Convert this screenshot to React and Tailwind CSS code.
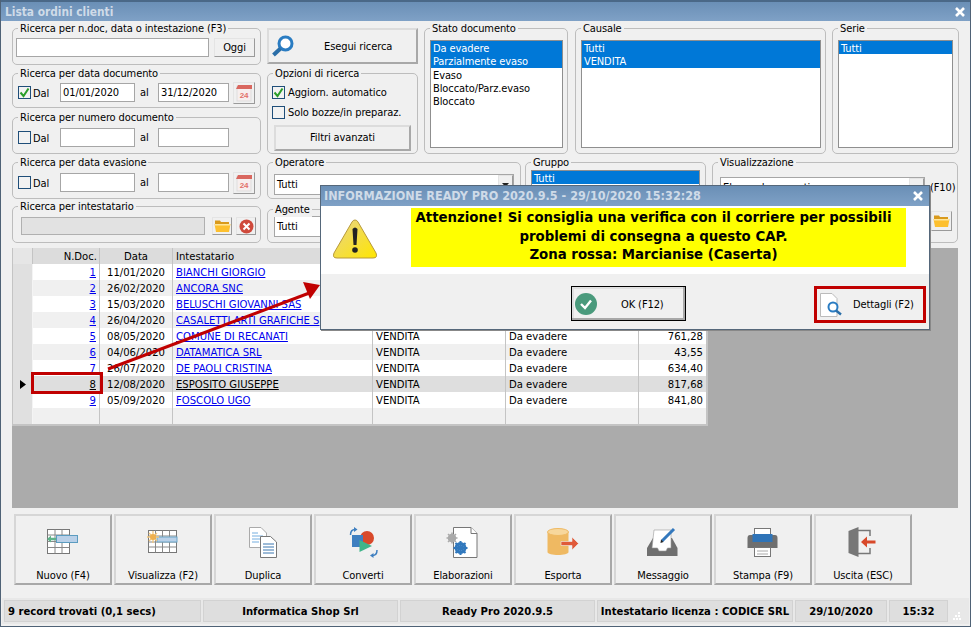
import React from "react";

const ROWS = [
  { n: 1, date: "11/01/2020", name: "BIANCHI GIORGIO" },
  { n: 2, date: "26/02/2020", name: "ANCORA SNC" },
  { n: 3, date: "15/03/2020", name: "BELUSCHI GIOVANNI SAS" },
  { n: 4, date: "26/04/2020", name: "CASALETTI ARTI GRAFICHE S" },
  { n: 5, date: "08/05/2020", name: "COMUNE DI RECANATI", total: "761,28" },
  { n: 6, date: "04/06/2020", name: "DATAMATICA SRL", total: "43,55" },
  { n: 7, date: "26/07/2020", name: "DE PAOLI CRISTINA", total: "634,40" },
  { n: 8, date: "12/08/2020", name: "ESPOSITO GIUSEPPE", total: "817,68" },
  { n: 9, date: "05/09/2020", name: "FOSCOLO UGO", total: "841,80" },
];

const COLS = "grid grid-cols-[20px_67px_73px_200px_133px_133px_67px]";
const RAISED = "border border-t-[#e4e4e4] border-l-[#e4e4e4] border-b-[#9a9a9a] border-r-[#9a9a9a] bg-[#f0f0f0]";
const RAISED2 = "border-2 border-t-[#dcdcdc] border-l-[#dcdcdc] border-b-[#a8a8a8] border-r-[#a8a8a8]";
const FIELD = "border border-[#a6a6a6] bg-white";

const Box = ({ label, className = "", children }) => (
  <div className={`relative rounded-[5px] border border-[#bdbdbd] ${className}`}>
    <span className="absolute -top-[7px] left-[5px] whitespace-nowrap bg-[#f0f0f0] px-[2px]">{label}</span>
    {children}
  </div>
);

const Check = ({ checked }) => (
  <span className="flex h-[13px] w-[13px] shrink-0 items-center justify-center border border-[#1f4e79] bg-[#f2f2f2]">
    {checked && (
      <svg width="11" height="11" viewBox="0 0 11 11">
        <path d="M1.5 5.5 L4.5 9 L9.5 1.5" fill="none" stroke="#2a9d2a" strokeWidth="2" />
      </svg>
    )}
  </span>
);

const Calendar = () => (
  <svg width="18" height="18" viewBox="0 0 18 18">
    <rect x="2" y="2" width="14" height="15" fill="#f7eeee" stroke="#ddd" />
    <path d="M1 5 L3 1 L17 1 L17 5 Z" fill="#d9675f" />
    <text x="9" y="14" textAnchor="middle" fontSize="8" fontWeight="700" fill="#e2706a" fontFamily="Liberation Sans, sans-serif">24</text>
  </svg>
);

const Folder = () => (
  <svg width="17" height="14" viewBox="0 0 17 14">
    <path d="M1 3 L1 1.5 L6 1.5 L7 3 L15 3 L15 5 L1 5 Z" fill="#d99a1c" />
    <path d="M0.5 5 L16.5 5 L15 13 L2 13 Z" fill="#fdc02f" />
    <path d="M1 5 L16 5 L16 6.5 L1 6.5 Z" fill="#ffe69a" />
  </svg>
);

const DateRow = ({ checked, first, second, calendar }) => (
  <div className="flex h-full items-center pl-[5px] pt-[4px]">
    <Check checked={checked} />
    <span className="w-[29px] pl-[2px] pt-[2px]">Dal</span>
    <div className={`h-[19px] w-[75px] pl-[2px] leading-[18px] ${FIELD}`}>{first}</div>
    <span className="w-[23px] pl-[5px]">al</span>
    <div className={`h-[19px] w-[71px] pl-[2px] leading-[18px] ${FIELD}`}>{second}</div>
    {calendar && (
      <div className={`ml-[4px] flex h-[22px] w-[22px] items-center justify-center ${RAISED}`}>
        <Calendar />
      </div>
    )}
  </div>
);

const ListBox = ({ items, selected, className = "" }) => (
  <div className={`border border-[#8f8f8f] bg-white leading-[15px] ${className}`}>
    {items.map((item, i) => (
      <div key={item} className={i < selected ? "h-[13.25px] bg-[#0078d7] pl-[2px] text-white" : "h-[13.25px] pl-[2px]"}>
        {item}
      </div>
    ))}
  </div>
);

const Combo = ({ value, className = "" }) => (
  <div className={`flex items-center justify-between pl-[2px] ${FIELD} ${className}`}>
    <span>{value}</span>
    <span className={`flex h-full w-[15px] items-center justify-center ${RAISED}`}>
      <svg width="7" height="4" viewBox="0 0 7 4"><path d="M0 0 H7 L3.5 4 Z" fill="#222" /></svg>
    </span>
  </div>
);

const icons = {
  nuovo: (
    <>
      <rect x="4.5" y="5.5" width="22" height="24" fill="#fff" stroke="#777" />
      <path d="M4.5 11 H26.5 M4.5 17.5 H26.5 M4.5 23.5 H26.5 M12 5.5 V29.5 M19 5.5 V29.5" stroke="#888" />
      <rect x="13.5" y="11.5" width="21" height="7" fill="#b9d0e8" stroke="#5b9cc0" />
      <path d="M4 15 L8 11.5 V13.7 H13 V16.3 H8 V18.5 Z" fill="#5fb38a" />
    </>
  ),
  visualizza: (
    <>
      <rect x="5.5" y="6.5" width="28" height="22" fill="#fff" stroke="#777" />
      <path d="M5.5 12 H33.5 M5.5 18 H33.5 M5.5 23 H33.5 M12.5 6.5 V28.5 M19.5 6.5 V28.5 M26.5 6.5 V28.5" stroke="#888" />
      <rect x="14" y="13" width="20" height="5" fill="#b9d0e8" stroke="#6aa6c8" />
      <path d="M10 7 V19 M4 13 H16 M6 9 L14 17 M14 9 L6 17" stroke="#f2c77e" strokeWidth="1.3" />
      <circle cx="10" cy="13" r="3" fill="#eeb04f" />
    </>
  ),
  duplica: (
    <>
      <path d="M6.5 3.5 H18 L23.5 9 V23.5 H6.5 Z" fill="#fff" stroke="#aaa" />
      <path d="M9 9 H15 M9 12 H20 M9 15 H20 M9 18 H16" stroke="#74aee0" />
      <path d="M17.5 12.5 H27.5 L33.5 18 V33.5 H17.5 Z" fill="#fff" stroke="#777" />
      <path d="M20 20 H31 M20 23 H31 M20 26 H31 M20 29 H31" stroke="#3b76b0" />
    </>
  ),
  converti: (
    <>
      <circle cx="24" cy="14" r="7" fill="#d8492a" />
      <rect x="9" y="11" width="11" height="12" fill="#3e7fc0" />
      <path d="M16.5 16 L29 22 L16.5 28 Z" fill="#3fb58a" />
      <path d="M7.5 11 C7.5 7 9.5 5.5 12 5.5" fill="none" stroke="#3e7fc0" strokeWidth="1.5" />
      <path d="M11 3 L14.5 5.5 L11 8 Z" fill="#3e7fc0" />
      <path d="M34 26 C34 30 32 31.5 29.5 31.5" fill="none" stroke="#3e7fc0" strokeWidth="1.5" />
      <path d="M30.5 29 L27 31.5 L30.5 34 Z" fill="#3e7fc0" />
    </>
  ),
  elaborazioni: (
    <>
      <path d="M10.5 3.5 H28 L34 9.5 V33.5 H10.5 Z" fill="#fff" stroke="#777" />
      <path d="M28 3.5 V9.5 H34" fill="#fff" stroke="#777" />
      <circle cx="9" cy="14" r="3" fill="none" stroke="#aaa" strokeWidth="2.5" />
      <path d="M9 8.5 V19.5 M3.5 14 H14.5 M5 10 L13 18 M13 10 L5 18" stroke="#aaa" strokeWidth="1.5" />
      <circle cx="17.5" cy="24" r="4.5" fill="none" stroke="#3178bd" strokeWidth="3" />
      <path d="M17.5 17 V31 M10.5 24 H24.5 M12.5 19 L22.5 29 M22.5 19 L12.5 29" stroke="#3178bd" strokeWidth="2" />
    </>
  ),
  esporta: (
    <>
      <path d="M4.5 8 V28 C4.5 32 25.5 32 25.5 28 V8 Z" fill="#efb962" />
      <ellipse cx="15" cy="8" rx="10.5" ry="3.5" fill="#f7d79c" stroke="#efb962" />
      <path d="M18 17.5 H29 V13 L35.5 19.5 L29 26 V21.5 H18 Z" fill="#e05a3a" stroke="#f0f0f0" strokeWidth="0.6" />
    </>
  ),
  messaggio: (
    <>
      <path d="M10 14 L4 24 V32 H34.5 V24 L29 14 Z" fill="#6f6f6f" />
      <path d="M11 6 H28 V24 L24.5 24 L23 27 H16 L14.5 24 H9 Z" fill="#fff" stroke="#999" strokeWidth="0.6" />
      <path d="M19 17 L31 5" stroke="#3378bd" strokeWidth="3" />
      <path d="M17.5 19 L18 15.5 L20.5 18 Z" fill="#222" />
    </>
  ),
  stampa: (
    <>
      <rect x="11.5" y="4.5" width="16" height="8" fill="#fff" stroke="#777" />
      <path d="M7 11 H32 Q34.5 11 34.5 14 V24 H4.5 V14 Q4.5 11 7 11 Z" fill="#6f6f6f" />
      <rect x="9.5" y="10" width="20" height="8" fill="#2f74b8" />
      <rect x="11.5" y="23.5" width="16" height="9" fill="#fff" stroke="#777" />
      <path d="M14 27 H25 M14 30 H25" stroke="#aaa" />
    </>
  ),
  uscita: (
    <>
      <path d="M15 6.5 H27 V12 M27 24 V29.5 H15" fill="none" stroke="#777" strokeWidth="1.5" />
      <path d="M5.5 7 L15.5 3 V33 L5.5 29 Z" fill="#777" />
      <path d="M18 18 L24 12.5 V16.5 H32.5 V19.5 H24 V23.5 Z" fill="#d8492a" />
    </>
  ),
};

const TOOLBAR = [
  ["nuovo", "Nuovo (F4)"],
  ["visualizza", "Visualizza (F2)"],
  ["duplica", "Duplica"],
  ["converti", "Converti"],
  ["elaborazioni", "Elaborazioni"],
  ["esporta", "Esporta"],
  ["messaggio", "Messaggio"],
  ["stampa", "Stampa (F9)"],
  ["uscita", "Uscita (ESC)"],
];

const ToolButton = ({ icon, label }) => (
  <div className="flex h-[71px] w-[98px] flex-col items-center border-2 border-t-[#d6d6d6] border-l-[#d6d6d6] border-b-[#a8a8a8] border-r-[#a8a8a8] pt-[8px]">
    <svg width="40" height="36" viewBox="0 0 40 36">{icons[icon]}</svg>
    <span className="mt-[9px]">{label}</span>
  </div>
);

const StatusCell = ({ className = "", children }) => (
  <div className={`flex h-[22px] items-center justify-center border border-[#d2d2d2] bg-[#dedede] pt-[1px] text-[11.2px] font-bold tracking-normal ${className}`}>
    {children}
  </div>
);

const App = () => (
  <div className="relative flex h-[627px] w-[971px] flex-col overflow-hidden border-x border-b border-[#4f6276] bg-[#f0f0f0] px-[1px] font-['DejaVu_Sans_Condensed','DejaVu_Sans',sans-serif] text-[11px] leading-[14px] tracking-[-0.1px] text-black">
    {/* Title bar */}
    <div className="-mx-[1px] flex h-[21px] shrink-0 items-center justify-between border-t-2 border-[#4a6887] bg-gradient-to-b from-[#6a8fb6] to-[#7fa1c6] pl-[4px] pr-[4px]">
      <span className="text-[11.8px] font-bold tracking-normal text-[#cfdbe8]">Lista ordini clienti</span>
      <span className="flex h-[12px] w-[12px] items-center justify-center">
        <svg width="10" height="10" viewBox="0 0 10 10"><path d="M1 1 L9 9 M9 1 L1 9" stroke="#fff" strokeWidth="2.6" /></svg>
      </span>
    </div>

    {/* Filters */}
    <div className="flex pl-[10px] pt-[7px]">
      <div className="w-[249px]">
        <Box label="Ricerca per n.doc, data o intestazione (F3)" className="h-[37px]">
          <div className="flex pl-[3px] pt-[9px]">
            <div className={`h-[19px] w-[193px] ${FIELD}`} />
            <div className={`ml-[5px] flex h-[19px] w-[41px] items-center justify-center pt-[1px] ${RAISED}`}>Oggi</div>
          </div>
        </Box>
        <Box label="Ricerca per data documento" className="mt-[8px] h-[35px]">
          <DateRow checked first="01/01/2020" second="31/12/2020" calendar />
        </Box>
        <Box label="Ricerca per numero documento" className="mt-[9px] h-[37px]">
          <DateRow />
        </Box>
        <Box label="Ricerca per data evasione" className="mt-[8px] h-[37px]">
          <DateRow calendar />
        </Box>
        <Box label="Ricerca per intestatario" className="mt-[7px] h-[37px]">
          <div className="flex items-center pl-[8px] pt-[10px]">
            <div className="h-[18px] w-[184px] border border-[#b0b0b0] bg-[#e2e2e2]" />
            <div className={`ml-[7px] flex h-[18px] w-[20px] items-center justify-center ${RAISED}`}><Folder /></div>
            <div className={`ml-[4px] flex h-[18px] w-[20px] items-center justify-center ${RAISED}`}>
              <svg width="15" height="15" viewBox="0 0 15 15">
                <circle cx="7.5" cy="7.5" r="7" fill="#cf4a3c" />
                <path d="M4.5 4.5 L10.5 10.5 M10.5 4.5 L4.5 10.5" stroke="#fff" strokeWidth="2" />
              </svg>
            </div>
          </div>
        </Box>
      </div>

      <div className="ml-[6px] w-[692px]">
        <div className="flex h-[127px]">
          <div className="w-[151px]">
            <div className={`flex h-[36px] items-center pl-[2px] ${RAISED2}`}>
              <svg width="24" height="22" viewBox="0 0 24 22">
                <circle cx="14.5" cy="8.5" r="6.5" fill="#fff" stroke="#2a7cc2" strokeWidth="3" />
                <path d="M9.5 13.5 L2.5 20" stroke="#2a6ea8" strokeWidth="4" />
              </svg>
              <span className="ml-[29px] pt-[1px]">Esegui ricerca</span>
            </div>
            <Box label="Opzioni di ricerca" className="mt-[9px] h-[81px]">
              <div className="flex h-[13px] items-center pl-[4px] mt-[12px]">
                <Check checked />
                <span className="ml-[3px]">Aggiorn. automatico</span>
              </div>
              <div className="flex h-[13px] items-center pl-[4px] mt-[7px]">
                <Check />
                <span className="ml-[3px]">Solo bozze/in preparaz.</span>
              </div>
              <div className={`ml-[6px] mt-[6px] flex h-[26px] w-[137px] items-center justify-center ${RAISED2}`}>
                Filtri avanzati
              </div>
            </Box>
          </div>
          <Box label="Stato documento" className="ml-[6px] h-[126px] w-[144px]">
            <ListBox
              className="ml-[5px] mt-[11px] h-[108px] w-[133px]"
              items={["Da evadere", "Parzialmente evaso", "Evaso", "Bloccato/Parz.evaso", "Bloccato"]}
              selected={2}
            />
          </Box>
          <Box label="Causale" className="ml-[7px] h-[126px] w-[251px]">
            <ListBox className="ml-[5px] mt-[11px] h-[108px] w-[240px]" items={["Tutti", "VENDITA"]} selected={2} />
          </Box>
          <Box label="Serie" className="ml-[6px] h-[126px] w-[127px]">
            <ListBox className="ml-[5px] mt-[11px] h-[108px] w-[115px]" items={["Tutti"]} selected={1} />
          </Box>
        </div>

        <div className="mt-[7px] flex h-[81px]">
          <div className="w-[254px]">
            <Box label="Operatore" className="h-[37px]">
              <Combo value="Tutti" className="ml-[6px] mt-[11px] h-[21px] w-[240px]" />
            </Box>
            <Box label="Agente" className="mt-[10px] h-[34px]">
              <Combo value="Tutti" className="ml-[6px] mt-[6px] h-[21px] w-[240px]" />
            </Box>
          </div>
          <Box label="Gruppo" className="ml-[4px] h-[81px] w-[181px]">
            <ListBox className="ml-[5px] mt-[7px] h-[68px] w-[169px]" items={["Tutti"]} selected={1} />
          </Box>
          <Box label="Visualizzazione" className="ml-[6px] h-[81px] w-[246px]">
            <div className="flex items-center pl-[7px] pt-[14px]">
              <Combo value="Elenco documenti" className="h-[21px] w-[205px]" />
              <span className="ml-[5px]">(F10)</span>
            </div>
            <div className={`ml-[218px] mt-[13px] flex h-[20px] w-[21px] items-center justify-center ${RAISED}`}><Folder /></div>
          </Box>
        </div>
      </div>
    </div>

    {/* Orders grid */}
    <div className="ml-[10px] mt-[5px] h-[260px] w-[946px] shrink-0 bg-[#ababab] text-[11.2px] tracking-normal">
      <div className="w-[696px] border-b-2 border-l border-r-2 border-[#c4c4c4] bg-white">
        <div className={`${COLS} h-[16px] bg-[#dcdcdc] leading-[17px]`}>
          <div className="border-r border-[#c4c4c4] bg-[#e6e6e6]" />
          <div className="border-r border-[#c4c4c4] pr-[2px] text-right">N.Doc.</div>
          <div className="border-r border-[#c4c4c4] text-center">Data</div>
          <div className="border-r border-[#c4c4c4] pl-[3px]">Intestatario</div>
          <div className="border-r border-[#c4c4c4]" />
          <div className="border-r border-[#c4c4c4]" />
          <div />
        </div>
        {ROWS.map((row) => {
          const selected = row.n === 8;
          const bg = selected ? "bg-[#dedede]" : row.n % 2 === 0 ? "bg-[#f0f0f0]" : "bg-white";
          const link = selected ? "underline" : "text-[#0000ee] underline";
          return (
            <div key={row.n} className={`${COLS} h-[16px] leading-[17px] ${bg}`}>
              <div className="flex items-center justify-center border-r border-b border-[#f4f4f4] bg-[#e0e0e0]">
                {selected && <svg width="6" height="9" viewBox="0 0 6 9"><path d="M0 0 L6 4.5 L0 9 Z" fill="#000" /></svg>}
              </div>
              <div className={`border-r border-[#c4c4c4] pr-[3px] text-right ${link}`}>{row.n}</div>
              <div className="border-r border-[#c4c4c4] text-center">{row.date}</div>
              <div className="overflow-hidden whitespace-nowrap border-r border-[#c4c4c4] pl-[3px]"><span className={link}>{row.name}</span></div>
              <div className="border-r border-[#c4c4c4] pl-[3px]">{row.total && "VENDITA"}</div>
              <div className="border-r border-[#c4c4c4] pl-[3px]">{row.total && "Da evadere"}</div>
              <div className="pr-[3px] text-right">{row.total}</div>
            </div>
          );
        })}
        <div className={`${COLS} h-[16px] bg-[#f0f0f0]`}>
          <div className="border-r border-[#f4f4f4] bg-[#e0e0e0]" />
          <div className="border-r border-[#c4c4c4]" />
          <div className="border-r border-[#c4c4c4]" />
          <div className="border-r border-[#c4c4c4]" />
          <div className="border-r border-[#c4c4c4]" />
          <div className="border-r border-[#c4c4c4]" />
          <div />
        </div>
      </div>
    </div>

    {/* Toolbar */}
    <div className="ml-[12px] mt-[6px] flex gap-[2px]">
      {TOOLBAR.map(([icon, label]) => (
        <ToolButton key={icon} icon={icon} label={label} />
      ))}
    </div>

    {/* Status bar */}
    <div className="mt-[13px] flex h-[26px] items-center gap-[2px] bg-[#e8e8e8] pl-[2px]">
      <StatusCell className="w-[197px] !justify-start pl-[3px]">9 record trovati (0,1 secs)</StatusCell>
      <StatusCell className="w-[195px]">Informatica Shop Srl</StatusCell>
      <StatusCell className="w-[195px]">Ready Pro 2020.9.5</StatusCell>
      <StatusCell className="w-[196px]">Intestatario licenza : CODICE SRL</StatusCell>
      <StatusCell className="w-[92px]">29/10/2020</StatusCell>
      <StatusCell className="w-[59px]">15:32</StatusCell>
      <svg className="ml-[3px] mt-[10px]" width="8" height="8" viewBox="0 0 8 8">
        <path d="M5 0 h2 v2 h-2 Z M2 3 h2 v2 h-2 Z M5 3 h2 v2 h-2 Z M0 6 h2 v2 h-2 Z M3 6 h2 v2 h-2 Z M6 6 h2 v2 h-2 Z" fill="#fff" />
      </svg>
    </div>

    {/* Annotations over the grid */}
    <div className="absolute left-[30px] top-[372px] h-[22px] w-[72px] border-[3px] border-[#c00000]" />
    <svg className="absolute left-[99px] top-[275px]" width="230" height="100" viewBox="0 0 230 100">
      <path d="M8 94 L212 17" stroke="#c00000" strokeWidth="3" />
      <path d="M220 10 L203 7 L210 24 Z" fill="#c00000" />
    </svg>

    {/* Message dialog */}
    <div className="absolute left-[319px] top-[185px] h-[145px] w-[610px] border border-[#55677a] bg-[#f0f0f0] shadow-[1px_1px_0_#888]">
      <div className="flex h-[20px] items-center justify-between bg-gradient-to-b from-[#6a8fb6] to-[#7fa1c6] pl-[3px] pr-[6px]">
        <span className="text-[12.5px] font-bold tracking-normal text-[#cfdbe8]">INFORMAZIONE READY PRO 2020.9.5 - 29/10/2020 15:32:28</span>
        <svg width="10" height="10" viewBox="0 0 10 10"><path d="M1 1 L9 9 M9 1 L1 9" stroke="#fff" strokeWidth="2.6" /></svg>
      </div>
      <div className="flex h-[68px] bg-white pt-[2px]">
        <svg className="ml-[11px] mt-[10px]" width="46" height="42" viewBox="0 0 46 42">
          <defs>
            <linearGradient id="warn" x1="0" y1="0" x2="1" y2="1">
              <stop offset="0" stopColor="#e8d48a" />
              <stop offset="1" stopColor="#ffe600" />
            </linearGradient>
          </defs>
          <path d="M23 2 Q25 2 26 4 L44 35 Q46 40 41 40 L5 40 Q0 40 2 35 L20 4 Q21 2 23 2 Z" fill="url(#warn)" stroke="#b89a3a" />
          <path d="M20.5 11 Q23 8 25.5 11 L24.5 27 H21.5 Z" fill="#222" />
          <circle cx="23" cy="32" r="2.8" fill="#222" />
        </svg>
        <div className="ml-[33px] h-[59px] w-[495px] bg-[#ffff00] pr-[10px] text-center text-[14.8px] font-bold leading-[18.5px] tracking-normal">
          <div>Attenzione! Si consiglia una verifica con il corriere per possibili</div>
          <div>problemi di consegna a questo CAP.</div>
          <div>Zona rossa: Marcianise (Caserta)</div>
        </div>
      </div>
      <div className="flex justify-between pl-[250px] pr-[3px] pt-[12px]">
        <div className="flex h-[35px] w-[115px] items-center border border-black bg-[#f0f0f0] pl-[3px] shadow-[inset_-2px_-2px_0_#a8a8a8,inset_2px_2px_0_#e0e0e0]">
          <svg width="22" height="22" viewBox="0 0 22 22">
            <circle cx="11" cy="11" r="11" fill="#4a9a7c" />
            <path d="M6 11 L10 15 L16 7.5" fill="none" stroke="#fff" strokeWidth="2.4" />
          </svg>
          <span className="ml-[24px] pt-[3px]">OK (F12)</span>
        </div>
        <div className="flex h-[37px] w-[112px] items-center border-[3px] border-[#c00000] bg-[#f0f0f0] pl-[2px]">
          <svg width="24" height="26" viewBox="0 0 24 26">
            <path d="M1.5 1.5 H13 L18 6.5 V24.5 H1.5 Z" fill="#fff" stroke="#bbb" />
            <circle cx="14" cy="15" r="4.5" fill="#fff" stroke="#2a7cc2" strokeWidth="2" />
            <path d="M17 18.5 L22 22.5" stroke="#2a6ea8" strokeWidth="2.4" />
          </svg>
          <span className="ml-[10px]">Dettagli (F2)</span>
        </div>
      </div>
    </div>
  </div>
);

export default App;
